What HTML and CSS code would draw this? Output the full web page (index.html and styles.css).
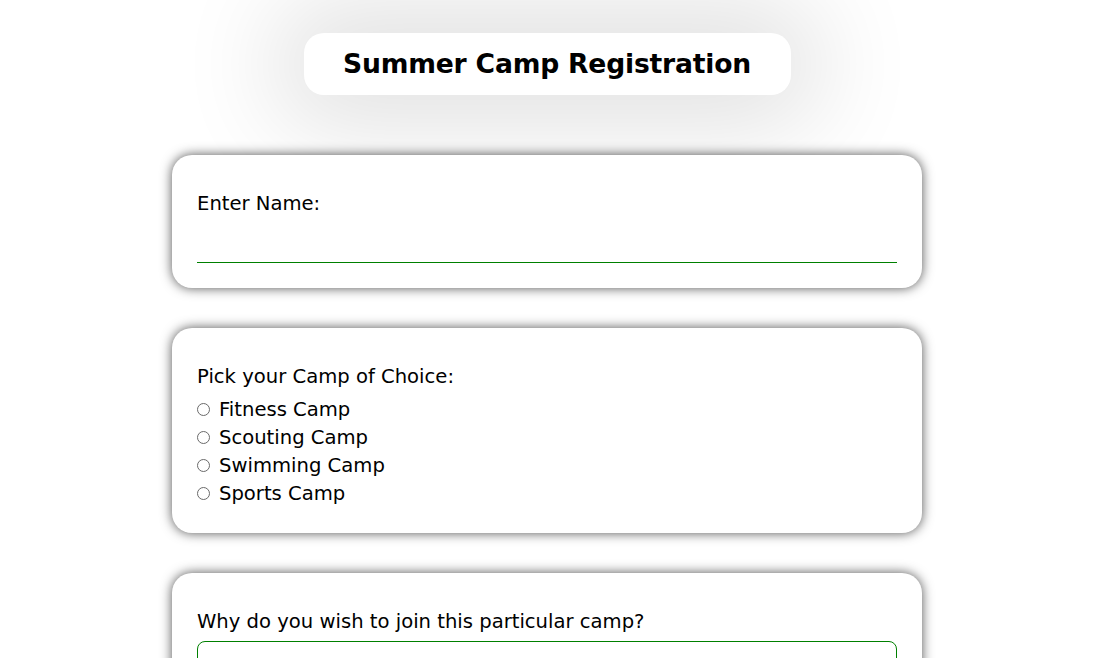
FILE: index.html
```html
<!DOCTYPE html>
<html lang="en">
<head>
<meta charset="utf-8">
<title>Summer Camp Registration</title>
<link rel="stylesheet" href="styles.css">
</head>
<body>
<div class="page">
  <header class="title-wrap">
    <h1 class="title">Summer Camp Registration</h1>
  </header>
  <form class="form">
    <section class="card">
      <label class="label" for="name">Enter Name:</label>
      <input class="name-input" id="name" type="text">
    </section>
    <section class="card">
      <div class="label">Pick your Camp of Choice:</div>
      <div class="options">
        <label class="option"><span class="radio"></span>Fitness Camp</label>
        <label class="option"><span class="radio"></span>Scouting Camp</label>
        <label class="option"><span class="radio"></span>Swimming Camp</label>
        <label class="option"><span class="radio"></span>Sports Camp</label>
      </div>
    </section>
    <section class="card">
      <label class="label" for="why">Why do you wish to join this particular camp?</label>
      <textarea class="why" id="why"></textarea>
    </section>
  </form>
</div>
</body>
</html>
```
FILE: styles.css
```css
html, body {
  margin: 0;
  padding: 0;
  background: #fff;
  overflow: hidden;
}
body {
  padding-right: 20px;
  font-family: "DejaVu Sans", sans-serif;
  color: #000;
}
.page {
  width: 750px;
  margin: 0 auto;
  padding-top: 33px;
}
.title-wrap {
  display: flex;
  justify-content: center;
}
.title {
  margin: 0;
  width: 487px;
  height: 62px;
  box-sizing: border-box;
  padding-bottom: 2px;
  background: #fff;
  border-radius: 20px;
  box-shadow: 0 0 100px 30px rgba(0, 0, 0, 0.12);
  display: flex;
  align-items: center;
  justify-content: center;
  font-size: 26.6px;
  font-weight: bold;
  letter-spacing: -0.2px;
}
.form {
  display: flex;
  flex-direction: column;
  gap: 40px;
  margin-top: 60px;
}
.card {
  background: #fff;
  border-radius: 20px;
  box-shadow: 0 0 12px rgba(0, 0, 0, 0.68);
  padding: 37px 25px 25px;
  display: flex;
  flex-direction: column;
}
.label {
  font-size: 19.6px;
  line-height: 24px;
}
.name-input {
  margin: 0;
  margin-top: 6px;
  height: 41px;
  box-sizing: border-box;
  border: none;
  border-bottom: 1px solid #008000;
  outline: none;
  background: transparent;
}
.options {
  display: flex;
  flex-direction: column;
  margin-top: 6px;
  margin-bottom: 1px;
}
.option {
  display: flex;
  align-items: center;
  gap: 9px;
  height: 28px;
  font-size: 19.6px;
}
.radio {
  width: 11px;
  height: 11px;
  border: 1px solid #6a6a6a;
  border-radius: 50%;
  flex: none;
}
.why {
  margin: 7px 0 0;
  height: 120px;
  border: 1px solid #008000;
  border-radius: 8px;
  resize: none;
  outline: none;
}
```
